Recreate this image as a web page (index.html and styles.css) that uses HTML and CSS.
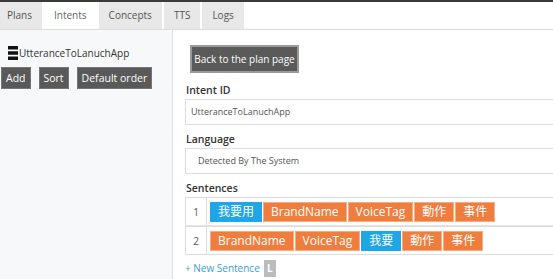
FILE: index.html
```html
<!DOCTYPE html>
<html>
<head>
<meta charset="utf-8">
<link rel="stylesheet" href="styles.css">
</head>
<body>
<div class="topline"></div>
<nav class="tabs">
  <div class="tab first">Plans</div>
  <div class="tab active">Intents</div>
  <div class="tab">Concepts</div>
  <div class="tab">TTS</div>
  <div class="tab">Logs</div>
</nav>
<div class="layout">
  <aside class="sidebar">
    <div class="intent-item">
      <svg class="handle" width="10" height="14" viewBox="0 0 10 14"><rect x="0" y="0" width="10" height="3.5" fill="#111"/><rect x="0" y="5.25" width="10" height="3.5" fill="#111"/><rect x="0" y="10.5" width="10" height="3.5" fill="#111"/></svg>
      <span>UtteranceToLanuchApp</span>
    </div>
    <div class="side-buttons">
      <button class="btn">Add</button>
      <button class="btn">Sort</button>
      <button class="btn">Default order</button>
    </div>
  </aside>
  <main class="content">
    <button class="back-btn">Back to the plan page</button>
    <div class="label first-label">Intent ID</div>
    <div class="field">UtteranceToLanuchApp</div>
    <div class="label">Language</div>
    <div class="field lang">Detected By The System</div>
    <div class="label">Sentences</div>
    <div class="sentences">
      <div class="row">
        <div class="num">1</div>
        <div class="tags">
          <span class="tag blue">我要用</span><span class="tag">BrandName</span><span class="tag">VoiceTag</span><span class="tag">動作</span><span class="tag">事件</span>
        </div>
      </div>
      <div class="row">
        <div class="num">2</div>
        <div class="tags">
          <span class="tag">BrandName</span><span class="tag">VoiceTag</span><span class="tag blue">我要</span><span class="tag">動作</span><span class="tag">事件</span>
        </div>
      </div>
    </div>
    <div class="new-sentence"><span class="link">+ New Sentence</span><span class="badge">L</span></div>
  </main>
</div>
</body>
</html>
```
FILE: styles.css
```css
html, body {
  margin: 0;
  padding: 0;
  background: #fff;
  overflow: hidden;
  font-family: "Open Sans", "Noto Sans CJK TC", sans-serif;
  color: #333;
}
.topline {
  height: 2px;
  background: #3a3a3a;
}
.tabs {
  display: flex;
  height: 27px;
  border-bottom: 1px solid #dcdcdc;
}
.tab {
  background: #e8e8e8;
  color: #555;
  font-size: 10px;
  line-height: 27px;
  padding: 0 10px;
  margin-right: 2px;
}
.tab.first {
  padding-left: 7px;
}
.tab.active {
  background: #fff;
  color: #666;
}
.layout {
  display: flex;
  height: 249px;
}
.sidebar {
  width: 172px;
  flex: none;
  background: #f7f8fa;
  border-right: 1px solid #dedede;
}
.intent-item {
  display: flex;
  align-items: center;
  padding: 16px 0 0 8px;
  height: 14px;
  font-size: 10px;
  color: #333;
}
.handle {
  margin-right: 1px;
}
.side-buttons {
  display: flex;
  gap: 8px;
  margin: 7px 0 0 1px;
}
.btn {
  background: #595959;
  color: #fff;
  border: 1px solid #767676;
  font-family: inherit;
  font-size: 10.5px;
  height: 22px;
  padding: 0 4px;
  margin: 0;
}
.content {
  flex: none;
  width: 420px;
  padding-left: 12px;
}
.back-btn {
  display: block;
  margin: 15px 0 0 5px;
  height: 28px;
  width: 109px;
  padding: 0;
  background: #5a5a5a;
  color: #fff;
  border: 2px solid #9a9a9a;
  font-family: inherit;
  font-size: 10px;
  white-space: nowrap;
}
.label {
  font-size: 10.5px;
  font-weight: 600;
  line-height: 16px;
  margin: 6px 0 1px 1px;
  color: #333;
}
.first-label {
  margin-top: 9px;
}
.field {
  height: 24px;
  border: 1px solid #dcdcdc;
  font-size: 9px;
  line-height: 24px;
  padding-left: 5px;
  color: #555;
}
.field.lang {
  padding-left: 12px;
}
.sentences {
  border: 1px solid #dcdcdc;
  border-top: 0;
}
.row {
  display: flex;
  border-top: 1px solid #dcdcdc;
  border-bottom: 1px solid #e4e4e4;
}
.row + .row {
  border-bottom: 0;
}
.num {
  width: 20px;
  border-right: 1px solid #dcdcdc;
  font-size: 10px;
  color: #555;
  display: flex;
  align-items: center;
  justify-content: center;
}
.tags {
  display: flex;
  gap: 1px;
  padding: 4px 3px 3px 3px;
}
.tag {
  display: inline-block;
  height: 20px;
  line-height: 18px;
  padding: 0 7px;
  border: 1px solid #f6ac82;
  background: #ef7d3e;
  color: #fff;
  font-size: 12px;
  box-sizing: border-box;
}
.tag.blue {
  background: #1fa6e6;
  border-color: #1fa6e6;
}
.new-sentence {
  display: flex;
  align-items: center;
  margin-top: 4px;
  height: 18px;
}
.link {
  color: #3a9ed8;
  font-size: 10px;
}
.badge {
  background: #bcbcbc;
  color: #fff;
  font-size: 10px;
  font-weight: 700;
  width: 12px;
  height: 17px;
  line-height: 17px;
  text-align: center;
  margin-left: 4px;
}
```
